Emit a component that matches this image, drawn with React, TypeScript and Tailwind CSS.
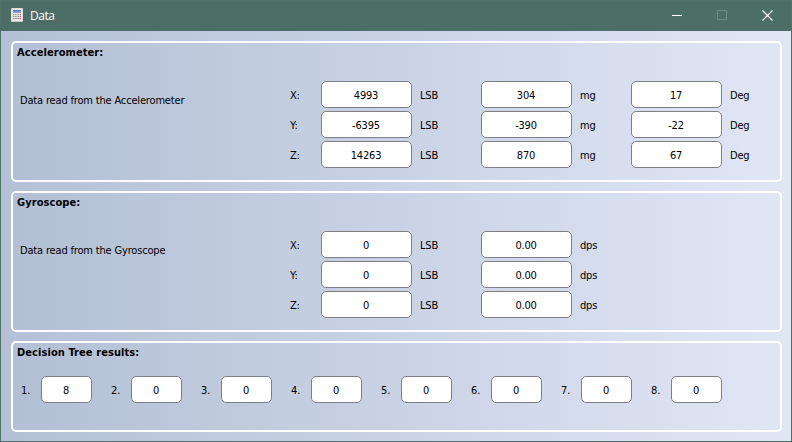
import React from "react";

type Field = { value: string; unit: string };
type Axis = { name: string; fields: Field[] };

const accelerometer: Axis[] = [
  { name: "X:", fields: [{ value: "4993", unit: "LSB" }, { value: "304", unit: "mg" }, { value: "17", unit: "Deg" }] },
  { name: "Y:", fields: [{ value: "-6395", unit: "LSB" }, { value: "-390", unit: "mg" }, { value: "-22", unit: "Deg" }] },
  { name: "Z:", fields: [{ value: "14263", unit: "LSB" }, { value: "870", unit: "mg" }, { value: "67", unit: "Deg" }] },
];

const gyroscope: Axis[] = ["X:", "Y:", "Z:"].map((name) => ({
  name,
  fields: [{ value: "0", unit: "LSB" }, { value: "0.00", unit: "dps" }],
}));

const decisions = ["8", "0", "0", "0", "0", "0", "0", "0"];

function Box({ value, className }: { value: string; className: string }) {
  return (
    <div className={`flex h-[27px] shrink-0 items-center justify-center rounded-[5px] border border-[#7d7f84] bg-white pt-0.5 pr-px tracking-[-0.2px] ${className}`}>
      {value}
    </div>
  );
}

function Panel({ title, className, children }: { title: string; className: string; children: React.ReactNode }) {
  return (
    <section className={`flex flex-col rounded-[5px] border-2 border-white bg-linear-to-r/srgb from-[#b2bfd4] to-[#e1e6f5] bg-origin-border ${className}`}>
      <h2 className="h-[18px] shrink-0 pl-1 text-[11px] leading-5 font-bold tracking-[0.08px]">{title}</h2>
      {children}
    </section>
  );
}

function Sensor({ description, axes }: { description: string; axes: Axis[] }) {
  return (
    <div className="flex pt-5 pl-[7px]">
      <p className="mt-[5px] h-[27px] w-[270px] shrink-0 leading-[29px]">{description}</p>
      <div className="flex shrink-0 flex-col gap-[3px]">
        {axes.map((axis) => (
          <div key={axis.name} className="flex items-center">
            <span className="w-[31px] shrink-0 pt-0.5">{axis.name}</span>
            {axis.fields.map((field, i) => (
              <React.Fragment key={field.unit}>
                <Box value={field.value} className="w-[91px]" />
                <span className={`shrink-0 pt-0.5 pl-2 tracking-[-0.2px] ${i === 0 ? "w-[69px]" : i === 1 ? "w-[59px]" : "w-9"}`}>{field.unit}</span>
              </React.Fragment>
            ))}
          </div>
        ))}
      </div>
    </div>
  );
}

function CalculatorIcon() {
  return (
    <svg width="12" height="14" viewBox="0 0 12 14">
      <rect width="12" height="14" rx="1" fill="#c9c8ca" />
      <rect x=".5" y=".5" width="11" height="12.5" rx=".5" fill="#efebe9" />
      <rect x="2" y="2" width="8" height="3" fill="#7d9acb" />
      <rect x="2" y="2" width="8" height="1" fill="#5777ac" />
      {[6, 8, 10].map((y) =>
        [2, 4.2, 6.4, 8.6].map((x) => (
          <rect key={`${x}-${y}`} x={x} y={y} width="1.4" height="1.2" fill={x === 8.6 ? "#d1625f" : "#8b8a92"} />
        ))
      )}
    </svg>
  );
}

export default function App() {
  return (
    <div className="flex h-[442px] w-[792px] flex-col overflow-hidden border border-[#50706a] bg-linear-to-r/srgb from-[#b3c0d6] to-[#e1e6f5] font-['DejaVu_Sans_Condensed','DejaVu_Sans',sans-serif] text-[11px] leading-[14px] tracking-[-0.17px] text-black">
      <header className="flex h-[30px] shrink-0 items-center bg-[#4d6e67] text-white">
        <div className="flex w-7 shrink-0 pb-0.5 pl-[10px]">
          <CalculatorIcon />
        </div>
        <h1 className="flex-1 pl-px font-['Open_Sans','Noto_Sans',sans-serif] text-xs tracking-[-0.5px]">Data</h1>
        <div className="flex shrink-0 items-center gap-[35px] pr-[18px] pb-0.5">
          <svg width="10" height="10" viewBox="0 0 10 10" shapeRendering="crispEdges">
            <path d="M0 5.5h10" stroke="white" />
          </svg>
          <svg width="10" height="10" viewBox="0 0 10 10" shapeRendering="crispEdges">
            <rect x=".5" y=".5" width="9" height="9" fill="none" stroke="#6f8a84" />
          </svg>
          <svg width="11" height="11" viewBox="0 0 11 11">
            <path d="m.5.5 10 10M10.5.5l-10 10" stroke="white" strokeWidth="1.2" />
          </svg>
        </div>
      </header>
      <main className="flex flex-col gap-[9px] px-[10px] pt-[10px]">
        <Panel title="Accelerometer:" className="h-[141px] w-[771px]">
          <Sensor description="Data read from the Accelerometer" axes={accelerometer} />
        </Panel>
        <Panel title="Gyroscope:" className="h-[141px] w-[771px]">
          <Sensor description="Data read from the Gyroscope" axes={gyroscope} />
        </Panel>
        <Panel title="Decision Tree results:" className="h-[91px] w-[771px]">
          <div className="flex gap-[19px] pt-[15px] pl-2">
            {decisions.map((value, i) => (
              <div key={i} className="flex items-center">
                <span className="w-5 pt-0.5">{i + 1}.</span>
                <Box value={value} className="w-[51px]" />
              </div>
            ))}
          </div>
        </Panel>
      </main>
    </div>
  );
}
